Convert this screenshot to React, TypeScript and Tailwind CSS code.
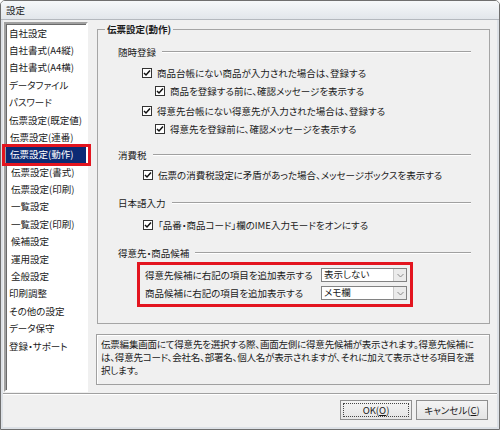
import type { ReactNode } from "react"

const font = { fontFamily: '"Noto Sans CJK JP", "Noto Sans", sans-serif' }

// 左側の設定メニュー（pl はスクショ通りの微妙なズレ）
const menuItems = [
  { label: "自社設定", pl: "pl-[3px]" },
  { label: "自社書式(A4縦)", pl: "pl-[3px]" },
  { label: "自社書式(A4横)", pl: "pl-[3px]" },
  { label: "データファイル", pl: "pl-[3px]" },
  { label: "パスワード", pl: "pl-[3px]" },
  { label: "伝票設定(既定値)", pl: "pl-[3px]" },
  { label: "伝票設定(連番)", pl: "pl-[4px]" },
  { label: "伝票設定(動作)", pl: "pl-[4px]", selected: true },
  { label: "伝票設定(書式)", pl: "pl-[5px]" },
  { label: "伝票設定(印刷)", pl: "pl-[5px]" },
  { label: "一覧設定", pl: "pl-[5px]" },
  { label: "一覧設定(印刷)", pl: "pl-[5px]" },
  { label: "候補設定", pl: "pl-[5px]" },
  { label: "運用設定", pl: "pl-[5px]" },
  { label: "全般設定", pl: "pl-[5px]" },
  { label: "印刷調整", pl: "pl-[3px]" },
  { label: "その他の設定", pl: "pl-[3px]" },
  { label: "データ保守", pl: "pl-[3px]" },
  { label: "登録・サポート", pl: "pl-[3px]" }
]

function CheckBox() {
  return (
    <span className="flex h-[10px] w-[10px] flex-none items-center justify-center border border-[#333] bg-white">
      <svg width="8" height="8" viewBox="0 0 8 8">
        <path d="M1 4 L3 6 L7 1.5" fill="none" stroke="#111" strokeWidth="1.5" />
      </svg>
    </span>
  )
}

function CheckRow({ label, indent, className = "" }: { label: string; indent: string; className?: string }) {
  return (
    <div className={`flex h-[18px] items-center gap-[5px] ${indent} ${className}`}>
      <CheckBox />
      <span className="whitespace-nowrap">{label}</span>
    </div>
  )
}

function SectionHeader({ title, className = "" }: { title: string; className?: string }) {
  return (
    <div className={`flex h-[14px] items-center gap-[6px] pl-[20px] pr-[18px] ${className}`}>
      <span className="whitespace-nowrap">{title}</span>
      <div className="h-[2px] flex-1 border-t border-b border-t-[#a0a0a0] border-b-white" />
    </div>
  )
}

function ComboBox({ value }: { value: string }) {
  return (
    <div className="flex h-[14px] w-[86px] items-stretch border border-[#828282] bg-white">
      <span className="flex flex-1 items-center pl-[2px] leading-none">{value}</span>
      <span className="flex w-[13px] items-center justify-center border-l border-[#c8c8c8] bg-[#ebebeb]">
        <svg width="7" height="5" viewBox="0 0 7 5">
          <path d="M0.5 1 L3.5 4 L6.5 1" fill="none" stroke="#8a8a8a" strokeWidth="1" />
        </svg>
      </span>
    </div>
  )
}

function Button({ children, focused }: { children: ReactNode; focused?: boolean }) {
  return (
    <div className="flex h-[20px] w-[72px] items-center justify-center border border-[#8f8f8f] bg-gradient-to-b from-[#f4f4f4] to-[#e4e4e4] p-[2px]">
      <div
        className={`flex h-full w-full items-center justify-center ${focused ? "border border-dotted border-[#444]" : ""}`}>
        {children}
      </div>
    </div>
  )
}

export default function App() {
  return (
    <div
      className="flex h-[430px] w-[500px] flex-col overflow-hidden rounded-t-[5px] border border-[#6f6f6f] text-[9.5px] text-[#1a1a1a] [font-feature-settings:'palt']"
      style={font}>
      {/* タイトルバー */}
      <div className="flex h-[19px] flex-none items-center border-b border-[#b4b8be] bg-gradient-to-b from-[#f6f8fa] to-[#e2e6eb] pl-[5px] text-[#222]">
        設定
      </div>

      <div className="flex flex-1 flex-col border-x-2 border-b-2 border-[#dde1e6] bg-[#f0f0f0]">
        <div className="flex h-[373px] flex-none gap-[8px] pt-[2px] pl-[1px] pr-[7px]">
          {/* メニュー一覧 */}
          <div className="flex h-[370px] w-[84px] flex-none flex-col border-2 border-t-[#a0a0a0] border-l-[#a0a0a0] border-r-white border-b-white bg-white shadow-[inset_1px_1px_0_#6a6a6a]">
            {menuItems.map((item) => (
              <div
                key={item.label}
                className={`relative flex h-[17.4px] flex-none items-center whitespace-nowrap ${item.pl} ${
                  item.selected ? "bg-[#0c2a74] text-white" : ""
                }`}>
                {item.label}
                {item.selected && (
                  <div className="absolute -top-[2px] -right-[5px] -bottom-[3px] -left-[4px] border-[3px] border-[#e3151f]" />
                )}
              </div>
            ))}
          </div>

          {/* 右側 */}
          <div className="flex w-[394px] flex-col">
            <fieldset className="ml-[1px] mt-[1px] h-[301px] border border-[#a5a5a5]">
              <legend className="ml-[7px] bg-[#f0f0f0] px-[2px] font-bold leading-[12px]">伝票設定(動作)</legend>

              <SectionHeader title="随時登録" className="mt-[10px]" />
              <CheckRow className="mt-[5px]" indent="pl-[44px]" label="商品台帳にない商品が入力された場合は、登録する" />
              <CheckRow indent="pl-[57px]" label="商品を登録する前に、確認メッセージを表示する" />
              <CheckRow className="mt-[2px]" indent="pl-[44px]" label="得意先台帳にない得意先が入力された場合は、登録する" />
              <CheckRow indent="pl-[57px]" label="得意先を登録前に、確認メッセージを表示する" />

              <SectionHeader title="消費税" className="mt-[10px]" />
              <CheckRow className="mt-[4px]" indent="pl-[45px]" label="伝票の消費税設定に矛盾があった場合、メッセージボックスを表示する" />

              <SectionHeader title="日本語入力" className="mt-[12px]" />
              <CheckRow className="mt-[6px]" indent="pl-[45px]" label="「品番・商品コード」欄のIME入力モードをオンにする" />

              <SectionHeader title="得意先・商品候補" className="mt-[12px]" />
              <div className="ml-[39px] mt-[2px] flex w-[276px] flex-col border-[3px] border-[#e3151f] pt-[1px] pb-[2px] pl-[5px] pr-[3px]">
                <div className="flex h-[18px] items-center">
                  <span className="w-[176px] flex-none whitespace-nowrap">得意先候補に右記の項目を追加表示する</span>
                  <ComboBox value="表示しない" />
                </div>
                <div className="flex h-[18px] items-center">
                  <span className="w-[176px] flex-none whitespace-nowrap">商品候補に右記の項目を追加表示する</span>
                  <ComboBox value="メモ欄" />
                </div>
              </div>
            </fieldset>

            {/* 説明 */}
            <div className="mt-[10px] h-[51px] border border-[#a0a0a0] pt-[3px] pl-[4px] leading-[13px] tracking-[-0.2px] shadow-[inset_1px_1px_0_#fff]">
              <div className="whitespace-nowrap">伝票編集画面にて得意先を選択する際、画面左側に得意先候補が表示されます。得意先候補に</div>
              <div className="whitespace-nowrap">は、得意先コード、会社名、部署名、個人名が表示されますが、それに加えて表示させる項目を選</div>
              <div className="whitespace-nowrap">択します。</div>
            </div>
          </div>
        </div>

        <div className="h-[2px] flex-none border-t border-b border-t-[#a0a0a0] border-b-white" />

        <div className="flex flex-1 items-start justify-end gap-[4px] pt-[5px] pr-[9px]">
          <Button focused>
            OK(<span className="underline">O</span>)
          </Button>
          <Button>
            キャンセル(<span className="underline">C</span>)
          </Button>
        </div>
      </div>
    </div>
  )
}
